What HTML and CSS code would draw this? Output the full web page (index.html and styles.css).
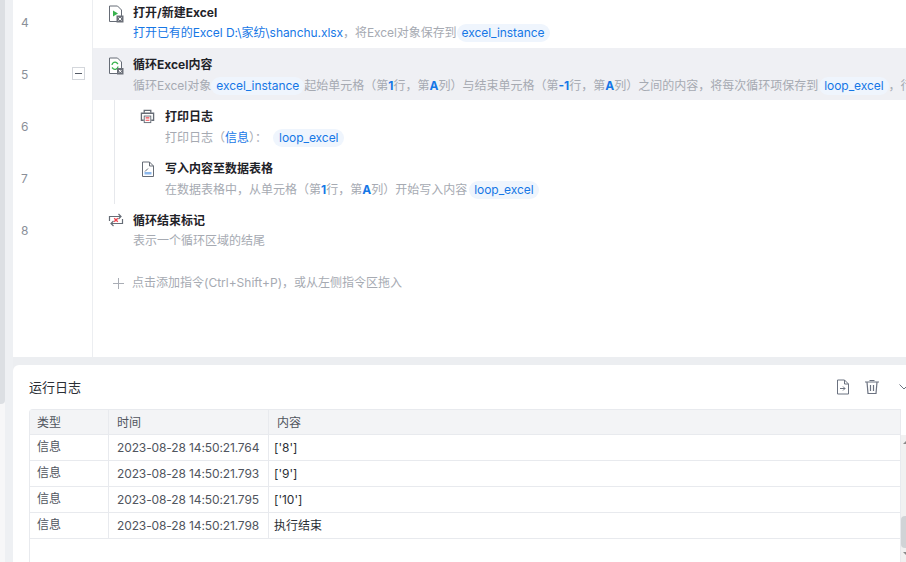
FILE: index.html
```html
<!DOCTYPE html>
<html lang="zh-CN">
<head>
<meta charset="utf-8">
<title>流程编辑器</title>
<link rel="stylesheet" href="styles.css">
</head>
<body>
<div class="app">
  <div class="side-strip"><div class="side-track"><div class="side-thumb"></div></div></div>
  <main class="main">
    <section class="editor">
      <div class="rows">
        <div class="row">
          <div class="gutter"><span class="num">4</span></div>
          <div class="step">
            <svg class="ico" viewBox="0 0 16 18" width="16" height="18"><path d="M1.500 1h8l4 4v11.500h-12z" fill="#fff" stroke="#666c76"/><path d="M5 5.500l5 3-5 3z" fill="#37b24d"/><rect x="8.500" y="10.500" width="7" height="7" fill="#6c7079"/><path d="M10.500 12.500l3 3m0-3l-3 3" stroke="#fff"/></svg>
            <div class="text">
              <div class="title">打开/新建Excel</div>
              <div class="desc desc-blue">打开已有的Excel D:\家纺\shanchu.xlsx<span class="gray">，将Excel对象保存到</span><span class="pill">excel_instance</span></div>
            </div>
          </div>
        </div>
        <div class="row row-active">
          <div class="gutter"><span class="num">5</span><span class="fold"></span></div>
          <div class="step">
            <svg class="ico" viewBox="0 0 16 18" width="16" height="18"><path d="M1.500 1h8l4 4v11.500h-12z" fill="#fff" stroke="#666c76"/><path d="M4 8a3 3 0 0 1 5-2l1 1M10 9.500a3 3 0 0 1-5 2l-1-1" fill="none" stroke="#37b24d" stroke-width="1.300"/><rect x="9" y="11" width="6.500" height="6.500" fill="#6c7079"/><path d="M11 13l2.500 2.500m0-2.500l-2.500 2.500" stroke="#fff"/></svg>
            <div class="text">
              <div class="title">循环Excel内容</div>
              <div class="desc desc-low">循环Excel对象<span class="pill">excel_instance</span>起始单元格（第<b class="hl">1</b>行，第<b class="hl">A</b>列）与结束单元格（第<b class="hl">-1</b>行，第<b class="hl">A</b>列）之间的内容，将每次循环项保存到<span class="pill pill-loop">loop_excel</span>，行号保存到</div>
            </div>
          </div>
        </div>
        <div class="row">
          <div class="gutter"><span class="num">6</span></div>
          <div class="step step-nested">
            <svg class="ico ico-sm" viewBox="0 0 16 16" width="15" height="15"><path d="M4.500 4V1.500h7V4" fill="none" stroke="#666c76" stroke-width="1.400"/><path d="M4 12H1.500V4.500h13V12H12" fill="none" stroke="#666c76" stroke-width="1.400"/><rect x="4.500" y="7.500" width="7" height="7" fill="#fff" stroke="#666c76"/><path d="M6 9.500h4M6 12h4" stroke="#f0424c" stroke-width="1.300"/></svg>
            <div class="text">
              <div class="title">打印日志</div>
              <div class="desc desc-low">打印日志（<span class="hl">信息</span>）：<span class="pill pill-wide">loop_excel</span></div>
            </div>
          </div>
        </div>
        <div class="row">
          <div class="gutter"><span class="num">7</span></div>
          <div class="step step-nested">
            <svg class="ico" viewBox="0 0 16 16" width="16" height="16"><path d="M2.500 1h7l4 4v10.500h-11z" fill="#fff" stroke="#666c76"/><path d="M9.500 1v4h4" fill="none" stroke="#666c76"/><path d="M4.500 11h7v2.500h-7z" fill="#8db8ec"/><path d="M5 10.500l3-3" stroke="#666c76"/></svg>
            <div class="text">
              <div class="title">写入内容至数据表格</div>
              <div class="desc desc-low">在数据表格中，从单元格（第<b class="hl">1</b>行，第<b class="hl">A</b>列）开始写入内容<span class="pill pill-gap">loop_excel</span></div>
            </div>
          </div>
        </div>
        <div class="row">
          <div class="gutter"><span class="num">8</span></div>
          <div class="step">
            <svg class="ico" viewBox="0 0 16 14" width="16" height="14"><path d="M1.500 8V3.500h11M10.500 1l2.500 2.500-2.500 2.500M14.500 6v4.500h-11M5.500 13L3 10.500 5.500 8" fill="none" stroke="#666c76" stroke-width="1.200"/><path d="M6.200 5.200l3.600 3.600m0-3.600l-3.600 3.600" stroke="#f0424c" stroke-width="1.300"/></svg>
            <div class="text">
              <div class="title">循环结束标记</div>
              <div class="desc">表示一个循环区域的结尾</div>
            </div>
          </div>
        </div>
        <div class="add-row">
          <div class="gutter"></div>
          <div class="add"><span class="plus"></span><span>点击添加指令(Ctrl+Shift+P)，或从左侧指令区拖入</span></div>
        </div>
      </div>
    </section>
    <section class="log">
      <header class="log-head">
        <h2>运行日志</h2>
        <div class="log-tools">
          <svg viewBox="0 0 14 16" width="14" height="16"><path d="M1.500 1h7l4 4v10h-11z" fill="none" stroke="#6b7280"/><path d="M8.500 1v4h4" fill="none" stroke="#6b7280"/><path d="M4 9.500h5M7 7.500l2 2-2 2" fill="none" stroke="#6b7280"/></svg>
          <svg viewBox="0 0 14 14" width="14" height="14"><path d="M0 2h14M4.500 0.500h5M2 2l1 11.500h8L12 2M5.500 5v6M8.500 5v6" fill="none" stroke="#6b7280" stroke-width="1.200"/></svg>
          <svg class="chev" viewBox="0 0 10 6" width="10" height="6"><path d="M0.500 0.500L5 5l4.500-4.500" fill="none" stroke="#6b7280"/></svg>
        </div>
      </header>
      <div class="table-wrap">
        <div class="table">
          <div class="t-row t-head"><div>类型</div><div>时间</div><div>内容</div></div>
          <div class="t-row"><div>信息</div><div>2023-08-28 14:50:21.764</div><div>['8']</div></div>
          <div class="t-row"><div>信息</div><div>2023-08-28 14:50:21.793</div><div>['9']</div></div>
          <div class="t-row"><div>信息</div><div>2023-08-28 14:50:21.795</div><div>['10']</div></div>
          <div class="t-row"><div>信息</div><div>2023-08-28 14:50:21.798</div><div>执行结束</div></div>
          <div class="t-rest"></div>
        </div>
        <div class="vbar"><span class="arrow-up"></span><span class="vthumb"></span><span class="arrow-down"></span></div>
      </div>
    </section>
  </main>
</div>
</body>
</html>
```
FILE: styles.css
```css
* { box-sizing: border-box; }
html, body { margin: 0; height: 100%; overflow: hidden; }
body {
  background: #eceef1;
  font-family: Inter, "Noto Sans CJK SC", sans-serif;
  font-size: 12px;
  color: #1f2329;
}
.app { display: flex; height: 562px; width: 906px; overflow: hidden; }
.side-strip { width: 13px; flex: none; background: #eef0f3; }
.side-track { width: 5px; height: 100%; background: #f7f7f8; }
.side-thumb { width: 5px; height: 404px; background: #dcdfe3; border-radius: 0 0 4px 0; }
.main { flex: 1; min-width: 0; display: flex; flex-direction: column; gap: 8px; }

.editor { height: 357px; background: #fff; overflow: hidden; flex: none; }
.rows { margin-top: -4px; display: flex; flex-direction: column; height: 361px; }
.row { display: flex; height: 52px; flex: none; }
.row-active { background: #eff0f4; }
.gutter {
  width: 80px; flex: none; position: relative; background: #fff;
  border-right: 1px solid #eceef1;
}
.num { position: absolute; left: 8px; top: 19px; color: #8a8f99; font-size: 12px; line-height: 16px; }
.fold {
  position: absolute; left: 59px; top: 19px; width: 13px; height: 13px;
  border: 1px solid #d4d7dc; background: #fff;
}
.fold::after { content: ""; position: absolute; left: 2px; top: 5px; width: 7px; height: 1px; background: #555b66; }
.step { display: flex; flex: 1; min-width: 0; padding: 8px 0 0 15px; gap: 9px; }
.step-nested { margin-left: 21px; padding-left: 25px; border-left: 1px solid #e6e8ec; }
.ico { flex: none; margin-top: 1px; }
.ico-sm { margin-right: 1px; }
.text { min-width: 0; flex: 1; }
.title { font-weight: 700; font-size: 12px; line-height: 18px; color: #1f2329; }
.desc { font-size: 12px; line-height: 20px; margin-top: 1px; color: #a6aab2; white-space: nowrap; overflow: hidden; }
.desc-low { margin-top: 2px; }
.desc-blue { color: #1677e6; letter-spacing: -.06px; }
.gray { color: #a6aab2; }
.hl { color: #1677e6; font-weight: 400; }
b.hl { font-weight: 700; }
.pill {
  display: inline-block; color: #1677e6; background: #eff5fd;
  border-radius: 9px; padding: 0 5px; margin: 0; line-height: 18px; letter-spacing: -.05px;
}
.pill-wide { margin-left: 6px; padding: 0 6px; }
.pill-gap { margin-left: 2px; }
.pill-loop { margin-left: 1px; }

.add-row { display: flex; flex: 1; }
.add-row .gutter { height: 100%; }
.add { padding: 17px 0 0 20px; color: #a6aab2; display: flex; gap: 8px; line-height: 20px; }
.plus { width: 11px; height: 11px; margin-top: 5px; position: relative; }
.plus::before, .plus::after { content: ""; position: absolute; background: #a9adb5; }
.plus::before { left: 0; top: 5px; width: 11px; height: 1px; }
.plus::after { left: 5px; top: 0; width: 1px; height: 11px; }

.log { flex: 1; background: #fff; border-radius: 6px 0 0 0; padding: 0 0 0 16px; min-height: 0; }
.log-head { height: 44px; display: flex; align-items: center; justify-content: space-between; }
.log-head h2 { margin: 0 0 2px; font-size: 13px; font-weight: 400; color: #2b2f36; }
.log-tools { display: flex; align-items: center; gap: 15px; margin-right: -3px; }
.chev { margin-left: 5px; }
.table-wrap { display: flex; height: 153px; }
.table {
  width: 872px; flex: none; border: 1px solid #e8eaee; border-bottom: 0;
  border-radius: 4px 0 0 0; display: flex; flex-direction: column;
}
.t-row { display: grid; grid-template-columns: 78px 160px 1fr; height: 26px; flex: none; border-bottom: 1px solid #e8eaee; color: #50555e; line-height: 25px; }
.t-row > div { padding-left: 7px; }
.t-row > div + div { border-left: 1px solid #e8eaee; }
.t-row > div:nth-child(1) { line-height: 23px; }
.t-row > div:nth-child(2) { padding-left: 8px; letter-spacing: -.12px; }
.t-row > div:nth-child(3) { padding-left: 5px; color: #2b2f36; }
.t-head { background: #f3f4f6; height: 25px; }
.t-head > div:nth-child(1) { line-height: 25px; }
.t-head > div:nth-child(3) { padding-left: 8px; color: #50555e; }
.t-rest { flex: 1; }
.vbar { width: 5px; flex: none; background: #f1f1f1; position: relative; margin-top: 26px; }
.vthumb { position: absolute; left: 0; top: 81px; width: 5px; height: 32px; background: #d0d3d6; border-radius: 4px 0 0 4px; }
.arrow-up, .arrow-down { position: absolute; left: 2px; width: 0; height: 0; border-left: 3px solid transparent; border-right: 3px solid transparent; }
.arrow-up { top: 6px; border-bottom: 3px solid #8a8a8a; }
.arrow-down { top: 117px; border-top: 3px solid #8a8a8a; }
```
